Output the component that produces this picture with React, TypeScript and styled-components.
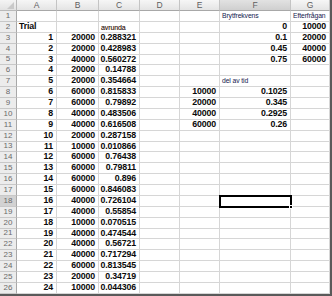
import React from 'react';
import { styled, createGlobalStyle } from 'styled-components';

const GlobalStyle = createGlobalStyle`
  html, body {
    margin: 0;
    padding: 0;
    background: #ffffff;
    overflow: hidden;
  }
`;

const COLS = ['A', 'B', 'C', 'D', 'E', 'F', 'G'];
const WIDTHS = [17, 40, 42, 41, 40, 40, 71, 39];
const SELECTED = { col: 'F', row: 18 };

const Sheet = styled.div`
  display: grid;
  grid-template-columns: ${WIDTHS.map((w) => `${w}px`).join(' ')};
  grid-template-rows: 11px;
  grid-auto-rows: 10.88px;
  width: 330px;
  height: 294px;
  border-right: 2px solid #5a5a5a;
  border-bottom: 2px solid #5a5a5a;
  font-family: 'Liberation Sans', Arial, sans-serif;
  overflow: hidden;
`;

const Corner = styled.div`
  position: relative;
  background: linear-gradient(#f4f4f4, #e2e2e2);
  border-right: 1px solid #b9b9b9;
  border-bottom: 1px solid #b9b9b9;
  box-sizing: border-box;

  &::after {
    content: '';
    position: absolute;
    right: 2px;
    bottom: 1px;
    border-left: 7px solid transparent;
    border-bottom: 7px solid #c9c9c9;
  }
`;

const ColHead = styled.div<{ $active?: boolean }>`
  display: flex;
  align-items: center;
  justify-content: center;
  box-sizing: border-box;
  background: ${(p) =>
    p.$active ? 'linear-gradient(#e2e2e2, #cfcfcf)' : 'linear-gradient(#f6f6f6, #e4e4e4)'};
  border-right: 1px solid #c4c4c4;
  border-bottom: 1px solid #a8a8a8;
  color: #5e5e5e;
  font-size: 8.5px;
  line-height: 1;
`;

const RowHead = styled.div<{ $active?: boolean }>`
  display: flex;
  align-items: center;
  justify-content: center;
  box-sizing: border-box;
  background: ${(p) => (p.$active ? '#d2d2d2' : '#ececec')};
  border-right: 1px solid #a8a8a8;
  border-bottom: 1px solid #c8c8c8;
  color: #6a6a6a;
  font-size: 8px;
  line-height: 1;
`;

const Cell = styled.div<{ $align: 'left' | 'right'; $label?: boolean; $selected?: boolean }>`
  position: relative;
  display: flex;
  align-items: flex-end;
  justify-content: ${(p) => (p.$align === 'right' ? 'flex-end' : 'flex-start')};
  box-sizing: border-box;
  padding: ${(p) => (p.$align === 'right' ? '0 3px 1px 0' : '0 0 1px 2px')};
  border-right: 1px solid #d6d6d6;
  border-bottom: 1px solid #d6d6d6;
  white-space: nowrap;
  overflow: visible;
  color: ${(p) => (p.$label ? '#14204e' : '#0a0a0a')};
  font-size: ${(p) => (p.$label ? '6.8px' : '8.8px')};
  font-weight: ${(p) => (p.$label ? 400 : 700)};
  letter-spacing: ${(p) => (p.$label ? '-0.1px' : '-0.15px')};
  line-height: 1;
  z-index: ${(p) => (p.$selected ? 2 : 0)};
  outline: ${(p) => (p.$selected ? '2px solid #000000' : 'none')};
  outline-offset: -1px;

  &::after {
    content: '';
    display: ${(p) => (p.$selected ? 'block' : 'none')};
    position: absolute;
    right: -3px;
    bottom: -3px;
    width: 4px;
    height: 4px;
    background: #000000;
    border: 1px solid #ffffff;
    box-sizing: border-box;
  }
`;

const Rounded = styled.span`
  color: #14204e;
  text-shadow: 0 0 0.4px #d9941c;
  font-size: 7px;
`;

const A_VALUES = Array.from({ length: 24 }, (_, i) => String(i + 1));
const B_VALUES = [
  20000, 20000, 40000, 20000, 20000, 60000, 60000, 40000, 40000, 20000, 10000, 60000,
  60000, 60000, 60000, 40000, 40000, 10000, 40000, 40000, 40000, 60000, 20000, 10000,
].map(String);
const C_VALUES = [
  '0.288321', '0.428983', '0.560272', '0.14788', '0.354664', '0.815833', '0.79892',
  '0.483506', '0.616508', '0.287158', '0.010866', '0.76438', '0.79811', '0.896',
  '0.846083', '0.726104', '0.55854', '0.070515', '0.474544', '0.56721', '0.717294',
  '0.813545', '0.34719', '0.044306',
];

type CellData = { text: string; label?: boolean; align?: 'left' | 'right' };

const buildData = () => {
  const data: Record<string, CellData> = {};
  data['A2'] = { text: 'Trial', align: 'left' };
  data['C2'] = { text: 'avrunda', label: true, align: 'left' };
  A_VALUES.forEach((v, i) => {
    data[`A${i + 3}`] = { text: v };
    data[`B${i + 3}`] = { text: B_VALUES[i] };
    data[`C${i + 3}`] = { text: C_VALUES[i] };
  });
  data['F1'] = { text: 'Brytfrekvens', label: true, align: 'left' };
  data['G1'] = { text: 'Efterfrågan', label: true, align: 'left' };
  ['0', '0.1', '0.45', '0.75'].forEach((v, i) => (data[`F${i + 2}`] = { text: v }));
  ['10000', '20000', '40000', '60000'].forEach((v, i) => (data[`G${i + 2}`] = { text: v }));
  data['F7'] = { text: 'del av tid', label: true, align: 'left' };
  ['10000', '20000', '40000', '60000'].forEach((v, i) => (data[`E${i + 8}`] = { text: v }));
  ['0.1025', '0.345', '0.2925', '0.26'].forEach((v, i) => (data[`F${i + 8}`] = { text: v }));
  return data;
};

const DATA = buildData();
const ROWS = Array.from({ length: 26 }, (_, i) => i + 1);

const App = () => {
  return (
    <>
      <GlobalStyle />
      <Sheet>
        <Corner />
        {COLS.map((c) => (
          <ColHead key={c} $active={c === SELECTED.col}>
            {c}
          </ColHead>
        ))}
        {ROWS.map((r) => (
          <React.Fragment key={r}>
            <RowHead $active={r === SELECTED.row}>{r}</RowHead>
            {COLS.map((c) => {
              const cell = DATA[`${c}${r}`];
              const selected = c === SELECTED.col && r === SELECTED.row;
              return (
                <Cell
                  key={c}
                  $align={cell?.align ?? 'right'}
                  $label={cell?.label}
                  $selected={selected}
                >
                  {cell && c === 'C' && r === 2 ? <Rounded>{cell.text}</Rounded> : cell?.text}
                </Cell>
              );
            })}
          </React.Fragment>
        ))}
      </Sheet>
    </>
  );
};

export default App;
